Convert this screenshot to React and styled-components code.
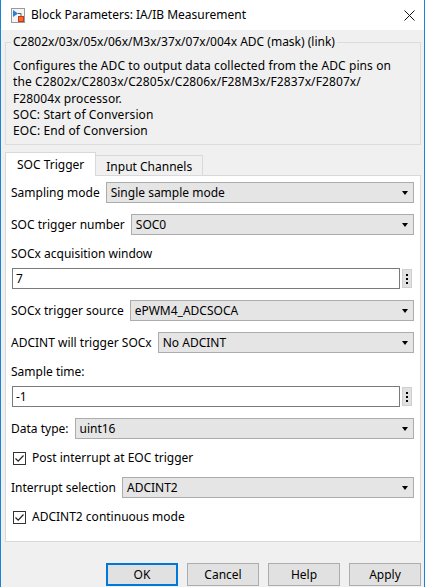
import React from 'react'
import styled, { createGlobalStyle } from 'styled-components'

const GlobalStyle = createGlobalStyle`
  html, body {
    margin: 0;
    padding: 0;
    background: #ffffff;
  }
  body {
    font-family: "Noto Sans", "Segoe UI", sans-serif;
    font-size: 12px;
    line-height: 16px;
    color: #000000;
  }
  * {
    box-sizing: border-box;
  }
`

const Window = styled.div`
  width: 425px;
  height: 587px;
  border-left: 1px solid #1883d7;
  border-right: 1px solid #1883d7;
  background: #f0f0f0;
  display: flex;
  flex-direction: column;
  overflow: hidden;
`

const TitleBar = styled.div`
  flex: none;
  height: 30px;
  background: #ffffff;
  display: flex;
  align-items: center;
  padding-left: 10px;
  padding-right: 9px;
  gap: 6px;
`

const Title = styled.div`
  flex: 1;
  white-space: nowrap;
`

const CloseIcon = styled.svg`
  display: block;
`

const Body = styled.div`
  flex: 1;
  padding: 4px 3px 0 4px;
  display: flex;
  flex-direction: column;
`

const GroupBox = styled.fieldset`
  margin: 0;
  padding: 8px 7px 5px 7px;
  border: 1px solid #dcdcdc;
  min-inline-size: 0;
`

const GroupTitle = styled.legend`
  padding: 0 2px;
  margin-left: -2px;
  white-space: nowrap;
`

const Description = styled.div`
  line-height: 16.25px;
  letter-spacing: 0.1px;
  white-space: nowrap;
`

const TabStrip = styled.div`
  margin-top: 7px;
  display: flex;
  align-items: flex-end;
  position: relative;
  z-index: 1;
`

const Tab = styled.div`
  height: ${(p) => (p.$active ? '24px' : '20px')};
  padding: 0 ${(p) => (p.$active ? '11px' : '10px')};
  padding-top: ${(p) => (p.$active ? '1px' : '2px')};
  display: flex;
  align-items: center;
  background: ${(p) => (p.$active ? '#ffffff' : '#f0f0f0')};
  border: 1px solid #d9d9d9;
  border-bottom: none;
  border-left: ${(p) => (p.$active ? '1px solid #d9d9d9' : 'none')};
  margin-bottom: ${(p) => (p.$active ? '-1px' : '0')};
  white-space: nowrap;
`

const Panel = styled.div`
  background: #ffffff;
  border: 1px solid #d9d9d9;
  padding: 6px 6px 16px 4px;
  display: flex;
  flex-direction: column;
  gap: 11px;
`

const Row = styled.div`
  display: flex;
  align-items: center;
  gap: 6px;
  padding-left: 1px;
`

const Label = styled.div`
  white-space: nowrap;
`

const FieldLabel = styled.div`
  height: 16px;
  padding-left: 1px;
  white-space: nowrap;
`

const Field = styled.div`
  display: flex;
  flex-direction: column;
  gap: 6px;
`

const Select = styled.div`
  flex: 1;
  height: 21px;
  display: flex;
  align-items: center;
  justify-content: space-between;
  padding: 0 5px 0 4px;
  background: #e5e5e5;
  border: 1px solid #acacac;
  white-space: nowrap;

  &::after {
    content: "";
    border-left: 3.5px solid transparent;
    border-right: 3.5px solid transparent;
    border-top: 4px solid #000000;
  }
`

const EditRow = styled.div`
  display: flex;
  align-items: center;
  gap: 2px;
  padding: 0 2px 0 2px;
`

const Edit = styled.div`
  flex: 1;
  height: 21px;
  display: flex;
  align-items: center;
  padding-left: 3px;
  background: #ffffff;
  border: 1px solid #7a7a7a;
`

const MoreButton = styled.div`
  width: 10px;
  height: 19px;
  display: flex;
  align-items: center;
  justify-content: center;
  background: #e1e1e1;
  border: 1px solid #cfcfcf;
`

const CheckRow = styled.div`
  height: 16px;
  display: flex;
  align-items: center;
  gap: 6px;
  padding-left: 3px;
  white-space: nowrap;
`

const CheckBox = styled.div`
  width: 13px;
  height: 13px;
  border: 1px solid #333333;
  background: #ffffff;
  display: flex;
  align-items: center;
  justify-content: center;
`

const ButtonBar = styled.div`
  margin-top: 21px;
  display: flex;
  justify-content: flex-end;
  gap: 9px;
`

const Button = styled.div`
  width: 72px;
  height: 23px;
  display: flex;
  align-items: center;
  justify-content: center;
  background: #e1e1e1;
  border: ${(p) => (p.$default ? '2px solid #0078d7' : '1px solid #adadad')};
`

const BlockIcon = () => (
  <svg width="14" height="15" viewBox="0 0 14 15">
    <rect x="0.5" y="0.5" width="13" height="14" fill="#f4f4f4" stroke="#9a9a9a" />
    <path d="M2 2 L7 5.5 L2 9 Z" fill="#2a7fd4" />
    <path d="M7 5.5 H10 V8" stroke="#5a5a5a" fill="none" />
    <rect x="7.5" y="8.5" width="5" height="5" fill="#f36c21" stroke="#c0392b" />
  </svg>
)

const Close = () => (
  <CloseIcon width="11" height="11" viewBox="0 0 11 11">
    <path d="M0.5 0.5 L10.5 10.5 M10.5 0.5 L0.5 10.5" stroke="#111111" strokeWidth="1" />
  </CloseIcon>
)

const Dots = () => (
  <svg width="2" height="10" viewBox="0 0 2 10">
    <rect x="0" y="0" width="2" height="2" fill="#000" />
    <rect x="0" y="4" width="2" height="2" fill="#000" />
    <rect x="0" y="8" width="2" height="2" fill="#000" />
  </svg>
)

const Check = () => (
  <svg width="11" height="11" viewBox="0 0 11 11">
    <path d="M1.5 5.5 L4.2 8.2 L9.5 2.5" stroke="#222" strokeWidth="1.2" fill="none" />
  </svg>
)

const description = [
  'Configures the ADC to output data collected from the ADC pins on',
  'the C2802x/C2803x/C2805x/C2806x/F28M3x/F2837x/F2807x/',
  'F28004x processor.',
  'SOC: Start of Conversion',
  'EOC: End of Conversion',
]

function SelectRow({ label, value }) {
  return (
    <Row>
      <Label>{label}</Label>
      <Select>{value}</Select>
    </Row>
  )
}

function EditField({ label, value }) {
  return (
    <Field>
      <FieldLabel>{label}</FieldLabel>
      <EditRow>
        <Edit>{value}</Edit>
        <MoreButton>
          <Dots />
        </MoreButton>
      </EditRow>
    </Field>
  )
}

function CheckField({ label }) {
  return (
    <CheckRow>
      <CheckBox>
        <Check />
      </CheckBox>
      {label}
    </CheckRow>
  )
}

export default function App() {
  return (
    <>
      <GlobalStyle />
      <Window>
        <TitleBar>
          <BlockIcon />
          <Title>Block Parameters: IA/IB Measurement</Title>
          <Close />
        </TitleBar>
        <Body>
          <GroupBox>
            <GroupTitle>C2802x/03x/05x/06x/M3x/37x/07x/004x ADC (mask) (link)</GroupTitle>
            {description.map((line, index) => (
              <Description key={index}>{line}</Description>
            ))}
          </GroupBox>

          <TabStrip>
            <Tab $active>SOC Trigger</Tab>
            <Tab>Input Channels</Tab>
          </TabStrip>
          <Panel>
            <SelectRow label="Sampling mode" value="Single sample mode" />
            <SelectRow label="SOC trigger number" value="SOC0" />
            <EditField label="SOCx acquisition window" value="7" />
            <SelectRow label="SOCx trigger source" value="ePWM4_ADCSOCA" />
            <SelectRow label="ADCINT will trigger SOCx" value="No ADCINT" />
            <EditField label="Sample time:" value="-1" />
            <SelectRow label="Data type:" value="uint16" />
            <CheckField label="Post interrupt at EOC trigger" />
            <SelectRow label="Interrupt selection" value="ADCINT2" />
            <CheckField label="ADCINT2 continuous mode" />
          </Panel>

          <ButtonBar>
            <Button $default>OK</Button>
            <Button>Cancel</Button>
            <Button>Help</Button>
            <Button>Apply</Button>
          </ButtonBar>
        </Body>
      </Window>
    </>
  )
}
